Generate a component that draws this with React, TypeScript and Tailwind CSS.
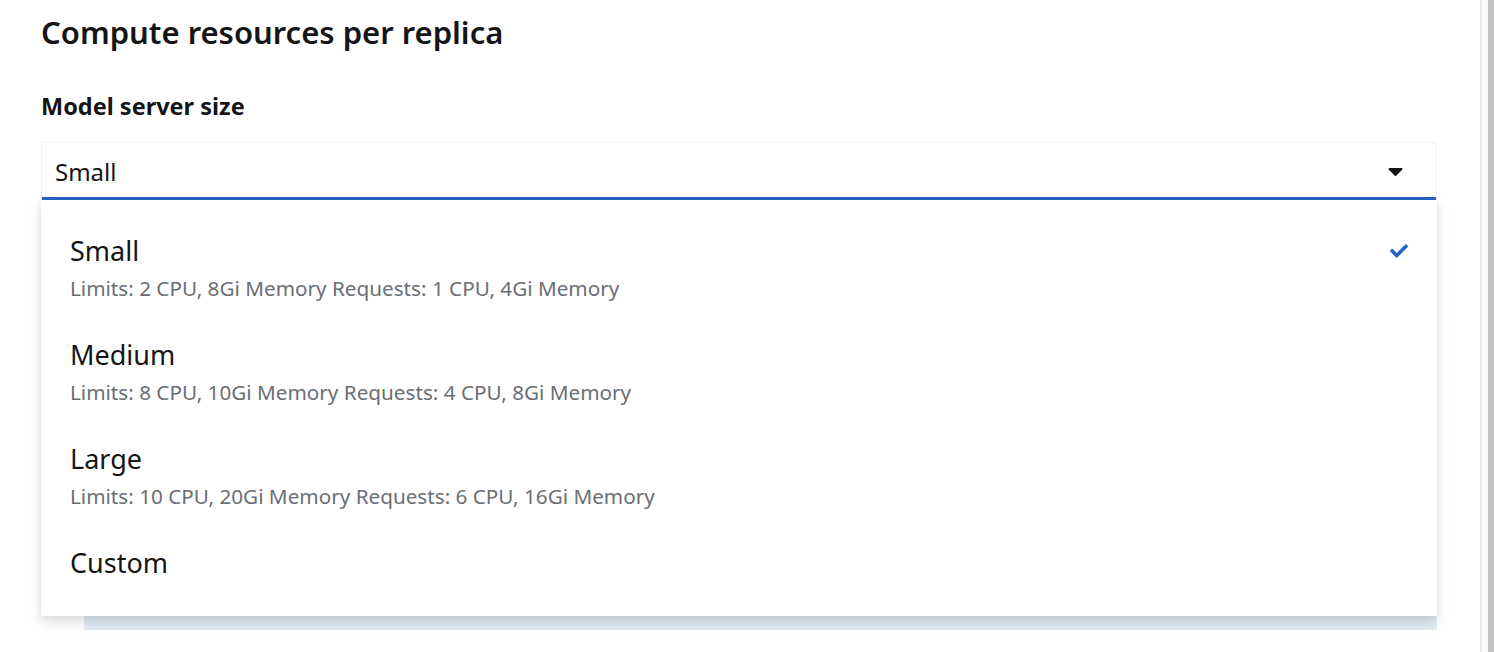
import React from 'react';

type SizeOption = {
    name: string;
    detail?: string;
    selected?: boolean;
};

const options: SizeOption[] = [
    { name: 'Small', detail: 'Limits: 2 CPU, 8Gi Memory Requests: 1 CPU, 4Gi Memory', selected: true },
    { name: 'Medium', detail: 'Limits: 8 CPU, 10Gi Memory Requests: 4 CPU, 8Gi Memory' },
    { name: 'Large', detail: 'Limits: 10 CPU, 20Gi Memory Requests: 6 CPU, 16Gi Memory' },
    { name: 'Custom' },
];

const CaretDown = () => (
    <svg width="15" height="8" viewBox="0 190 320 172" fill="#151515" aria-hidden="true">
        <path d="M31.3 192h257.3c17.8 0 26.7 21.5 14.1 34.1L174.1 354.8c-7.8 7.8-20.5 7.8-28.3 0L17.2 226.1C4.6 213.5 13.5 192 31.3 192z" />
    </svg>
);

const Check = () => (
    <svg width="18" height="14" viewBox="0 64 512 384" fill="#2a63c8" aria-hidden="true">
        <path d="M173.898 439.404l-166.4-166.4c-9.997-9.997-9.997-26.206 0-36.204l36.203-36.204c9.997-9.998 26.207-9.998 36.204 0L192 312.69 432.095 72.596c9.997-9.997 26.207-9.997 36.204 0l36.203 36.204c9.997 9.997 9.997 26.206 0 36.204l-294.4 294.401c-9.998 9.997-26.207 9.997-36.204-.001z" />
    </svg>
);

export default function App() {
    return (
        <div className="flex h-[652px] w-full overflow-hidden bg-white text-[#151515]" style={{ fontFamily: '"Noto Sans", "Liberation Sans", sans-serif' }}>
            <div className="flex-1 pl-[41px] pr-[43px] pt-[14px]">
                <h2 className="text-[31px] leading-[36px] font-semibold">Compute resources per replica</h2>

                <div className="mt-[41px] text-[23.5px] leading-[30px] font-bold">Model server size</div>

                <div className="relative mt-[21px]">
                    {/* select toggle */}
                    <div className="flex h-[58px] items-center justify-between border border-b-0 border-[#f0f0f0] pl-[13px] pr-[33px] shadow-[inset_0_-3px_0_0_#2a63c8]">
                        <span className="text-[24px] leading-[30px]">Small</span>
                        <CaretDown />
                    </div>

                    {/* content underneath the open menu */}
                    <div className="ml-[43px] mt-[320px] h-[110px] bg-[#e2eaf3]" />

                    {/* open menu */}
                    <ul className="absolute left-0 right-0 top-[58px] z-10 bg-white pt-[16px] pb-[18px] shadow-[0_6px_12px_0_rgba(3,3,3,0.13),0_0_6px_0_rgba(3,3,3,0.07)]">
                        {options.map((opt) => (
                            <li key={opt.name} className="flex items-start justify-between px-[29px] py-[17px]">
                                <div>
                                    <div className="text-[27px] leading-[36px]">{opt.name}</div>
                                    {opt.detail && (
                                        <div className="mt-[4px] text-[20.7px] leading-[30px] text-[#6a6e73]">{opt.detail}</div>
                                    )}
                                </div>
                                {opt.selected && (
                                    <div className="pt-[11px]">
                                        <Check />
                                    </div>
                                )}
                            </li>
                        ))}
                    </ul>
                </div>
            </div>

            {/* scrollbar */}
            <div className="flex w-[14px] border-l-2 border-[#e8e8e8] bg-[#fafafa]">
                <div className="ml-auto w-[6px] bg-[#c1c1c1]" />
            </div>
        </div>
    );
}
